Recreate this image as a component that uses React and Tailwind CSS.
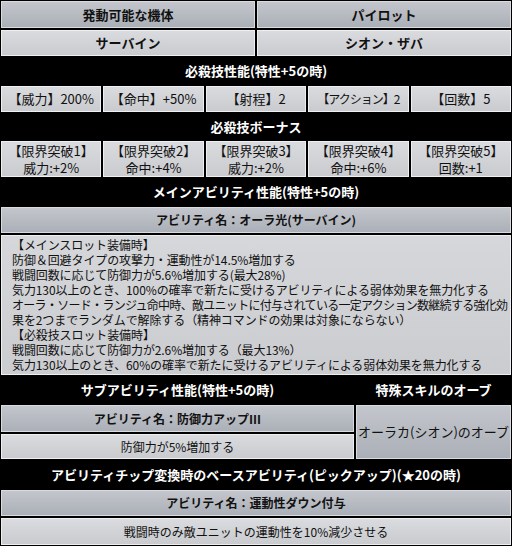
const font = { fontFamily: '"Noto Sans CJK JP", "Noto Sans", sans-serif' };

const dark =
  "flex items-center justify-center border border-[#d9dbdf] bg-gradient-to-b from-[#c3c6cc] to-[#abafb7] text-[#111] font-bold";
const light =
  "flex items-center justify-center border border-[#eeeff1] bg-gradient-to-b from-[#dadbde] to-[#cacbcf] text-[#111]";
const head =
  "flex items-center justify-center bg-black text-white font-bold text-[13px]";

function Cell({ className, children }) {
  return <div className={className}>{children}</div>;
}

export default function App() {
  const skill = ["【威力】200%", "【命中】+50%", "【射程】2", "【アクション】2", "【回数】5"];
  const bonus = [
    ["【限界突破1】", "威力:+2%"],
    ["【限界突破2】", "命中:+4%"],
    ["【限界突破3】", "威力:+2%"],
    ["【限界突破4】", "命中:+6%"],
    ["【限界突破5】", "回数:+1"],
  ];
  const lines = [
    "【メインスロット装備時】",
    "防御＆回避タイプの攻撃力・運動性が14.5%増加する",
    "戦闘回数に応じて防御力が5.6%増加する(最大28%)",
    "気力130以上のとき、100%の確率で新たに受けるアビリティによる弱体効果を無力化する",
    "オーラ・ソード・ランジュ命中時、敵ユニットに付与されている一定アクション数継続する強化効",
    "果を2つまでランダムで解除する（精神コマンドの効果は対象にならない）",
    "【必殺技スロット装備時】",
    "戦闘回数に応じて防御力が2.6%増加する（最大13%）",
    "気力130以上のとき、60%の確率で新たに受けるアビリティによる弱体効果を無力化する",
  ];

  return (
    <div
      style={font}
      className="w-[512px] h-[546px] bg-black p-[1px] flex flex-col gap-[2px] text-[13px] overflow-hidden"
    >
      <div className="grid grid-cols-2 gap-[2px]">
        <Cell className={`${dark} h-[27px] text-[13px]`}>発動可能な機体</Cell>
        <Cell className={`${dark} h-[27px] text-[13px]`}>パイロット</Cell>
      </div>
      <div className="grid grid-cols-2 gap-[2px]">
        <Cell className={`${light} h-[26px] font-bold`}>サーバイン</Cell>
        <Cell className={`${light} h-[26px] font-bold`}>シオン・ザバ</Cell>
      </div>
      <Cell className={`${head} h-[26px]`}>必殺技性能(特性+5の時)</Cell>
      <div className="grid grid-cols-5 gap-[2px]">
        {skill.map((s) => (
          <Cell key={s} className={`${light} h-[26px] ${s.includes("アクション") ? "text-[12px] tracking-[-1px]" : ""}`}>
            {s}
          </Cell>
        ))}
      </div>
      <Cell className={`${head} h-[25px]`}>必殺技ボーナス</Cell>
      <div className="grid grid-cols-5 gap-[2px]">
        {bonus.map(([a, b]) => (
          <Cell key={a} className={`${light} h-[36px] flex-col leading-[17px]`}>
            <span>{a}</span>
            <span>{b}</span>
          </Cell>
        ))}
      </div>
      <Cell className={`${head} h-[26px]`}>メインアビリティ性能(特性+5の時)</Cell>
      <Cell className={`${dark} h-[26px] text-[12px]`}>アビリティ名：オーラ光(サーバイン)</Cell>
      <div className="h-[140px] overflow-hidden border border-[#eeeff1] bg-gradient-to-b from-[#d6d7da] to-[#cbccd0] text-[#111] px-[10px] pt-[1px] text-[12px] leading-[15px] whitespace-nowrap tracking-[-0.1px]">
        {lines.map((l, i) => (
          <div key={l} className={i === 4 ? "tracking-[-0.7px]" : ""}>
            {l}
          </div>
        ))}
      </div>
      <div className="grid grid-cols-[353px_1fr] grid-rows-[26px_27px_25px] gap-[2px]">
        <Cell className={head}>サブアビリティ性能(特性+5の時)</Cell>
        <Cell className={head}>特殊スキルのオーブ</Cell>
        <Cell className={`${dark} text-[12px]`}>アビリティ名：防御力アップⅢ</Cell>
        <Cell className={`${dark} row-span-2 font-normal text-[13px]`}>オーラカ(シオン)のオーブ</Cell>
        <Cell className={`${light} text-[12px]`}>防御力が5%増加する</Cell>
      </div>
      <Cell className={`${head} h-[27px] text-[12.5px]`}>
        アビリティチップ変換時のベースアビリティ(ピックアップ)(★20の時)
      </Cell>
      <Cell className={`${dark} h-[26px] text-[12px]`}>アビリティ名：運動性ダウン付与</Cell>
      <Cell className={`${light} h-[27px] text-[12px]`}>戦闘時のみ敵ユニットの運動性を10%減少させる</Cell>
    </div>
  );
}
